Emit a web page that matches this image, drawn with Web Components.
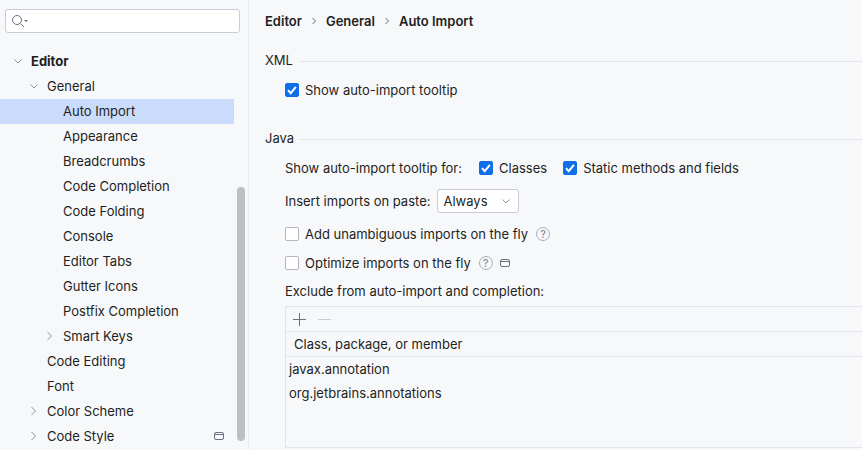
<!DOCTYPE html>
<html>
<head>
<meta charset="utf-8">
<style>
  html, body { margin: 0; height: 100%; overflow: hidden; }
  body {
    display: flex;
    width: 862px;
    height: 450px;
    background: #f7f8fa;
    color: #1e1f22;
    font: 13px/16px Inter, "Liberation Sans", sans-serif;
  }
</style>
</head>
<body>
<settings-sidebar>
  <tree-row level="0" clipped>Keymap</tree-row>
  <tree-row level="0" arrow="open" bold>Editor</tree-row>
  <tree-row level="1" arrow="open">General</tree-row>
  <tree-row level="2" selected>Auto Import</tree-row>
  <tree-row level="2">Appearance</tree-row>
  <tree-row level="2">Breadcrumbs</tree-row>
  <tree-row level="2">Code Completion</tree-row>
  <tree-row level="2">Code Folding</tree-row>
  <tree-row level="2">Console</tree-row>
  <tree-row level="2">Editor Tabs</tree-row>
  <tree-row level="2">Gutter Icons</tree-row>
  <tree-row level="2">Postfix Completion</tree-row>
  <tree-row level="2" arrow="closed">Smart Keys</tree-row>
  <tree-row level="1">Code Editing</tree-row>
  <tree-row level="1">Font</tree-row>
  <tree-row level="1" arrow="closed">Color Scheme</tree-row>
  <tree-row level="1" arrow="closed" project>Code Style</tree-row>
</settings-sidebar>
<settings-page></settings-page>

<script>
const PROJECT_ICON = `<svg width="10" height="10" viewBox="0 0 10 10" fill="none" stroke="#6c707e"><rect x="0.5" y="1.5" width="9" height="7" rx="1.5"/><path d="M0.5 3.5h9"/></svg>`;
const CHEVRON_DOWN = `<svg width="10" height="10" viewBox="0 0 10 10" fill="none" stroke="#8f93a1"><path d="M1.5 3.5L5 7l3.5-3.5"/></svg>`;
const CHEVRON_RIGHT = `<svg width="10" height="10" viewBox="0 0 10 10" fill="none" stroke="#8f93a1"><path d="M2.5 1L6.5 5l-4 4"/></svg>`;

class SettingsSidebar extends HTMLElement {
  connectedCallback() {
    this.attachShadow({ mode: 'open' });
    this.shadowRoot.innerHTML = `
      <style>
        :host { display: flex; flex-direction: column; flex: none; width: 248px; height: 450px; border-right: 1px solid #ebecf0; position: relative; box-sizing: content-box; }
        .search { padding: 9px 0 11px 5px; flex: none; }
        .box { height: 24px; width: 235px; background: #fff; border: 1px solid #c9ccd6; border-radius: 3px; display: flex; align-items: center; padding-left: 6px; box-sizing: border-box; }
        .tree { flex: 1; overflow: hidden; padding-right: 14px; }
        .scroll { margin-top: -20px; }
        .thumb { position: absolute; left: 237px; top: 187px; width: 8px; height: 254px; border-radius: 4px; background: #bdbfc3; }
      </style>
      <div class="search"><div class="box">
        <svg width="18" height="16" viewBox="0 0 18 16" fill="none" stroke="#6c707e">
          <circle cx="5" cy="7" r="4.5"/><path d="M8.5 10.5L12 14"/>
          <path d="M12 7h4l-2 2z" fill="#6c707e" stroke="none"/>
        </svg>
      </div></div>
      <div class="tree"><div class="scroll"><slot></slot></div></div>
      <div class="thumb"></div>
    `;
  }
}
customElements.define('settings-sidebar', SettingsSidebar);

class TreeRow extends HTMLElement {
  connectedCallback() {
    const level = +this.getAttribute('level');
    const arrow = this.getAttribute('arrow');
    const icon = arrow === 'open' ? CHEVRON_DOWN : arrow === 'closed' ? CHEVRON_RIGHT : '';
    this.attachShadow({ mode: 'open' });
    this.shadowRoot.innerHTML = `
      <style>
        :host { display: flex; align-items: center; box-sizing: border-box; height: 25px; padding: 0 0 1px ${13 + level * 16}px; white-space: nowrap; }
        :host([selected]) { background: #c9dcfc; }
        :host([bold]) { font-weight: 700; }
        .arrow { width: 18px; flex: none; display: flex; }
        .label { flex: 1; }
        .project { display: flex; margin-right: 10px; }
      </style>
      <span class="arrow">${icon}</span>
      <span class="label"><slot></slot></span>
      ${this.hasAttribute('project') ? `<span class="project">${PROJECT_ICON}</span>` : ''}
    `;
  }
}
customElements.define('tree-row', TreeRow);

class GroupTitle extends HTMLElement {
  connectedCallback() {
    this.attachShadow({ mode: 'open' });
    this.shadowRoot.innerHTML = `
      <style>
        :host { display: flex; align-items: center; gap: 6px; height: 16px; }
        i { flex: 1; height: 1px; margin-top: 2px; background: #e3e5ea; }
      </style>
      <slot></slot><i></i>
    `;
  }
}
customElements.define('group-title', GroupTitle);

class CheckOption extends HTMLElement {
  connectedCallback() {
    const on = this.hasAttribute('checked');
    this.attachShadow({ mode: 'open' });
    this.shadowRoot.innerHTML = `
      <style>
        :host { display: inline-flex; align-items: center; gap: 6px; white-space: nowrap; }
        .box { width: 14px; height: 14px; box-sizing: border-box; border-radius: 2px; display: flex; border: 1px solid ${on ? '#0f6fe8' : '#b4b7c0'}; background: ${on ? '#0f6fe8' : '#fff'}; }
        svg { margin: -1px; flex: none; }
      </style>
      <span class="box">${on ? `<svg width="14" height="14" viewBox="0 0 14 14" fill="none" stroke="#fff" stroke-width="2"><path d="M3 7.2l2.7 3 5.2-6.4"/></svg>` : ''}</span>
      <slot></slot>
    `;
  }
}
customElements.define('check-option', CheckOption);

class HelpIcon extends HTMLElement {
  connectedCallback() {
    this.attachShadow({ mode: 'open' });
    this.shadowRoot.innerHTML = `
      <style>
        :host { display: inline-flex; width: 14px; height: 14px; align-items: center; justify-content: center; border-radius: 50%; border: 1px solid #a8adbd; box-sizing: border-box; color: #8a8f9e; font-size: 11px; line-height: 12px; font-weight: 500; }
      </style>?
    `;
  }
}
customElements.define('help-icon', HelpIcon);

class ComboBox extends HTMLElement {
  connectedCallback() {
    this.attachShadow({ mode: 'open' });
    this.shadowRoot.innerHTML = `
      <style>
        :host { display: inline-flex; align-items: center; justify-content: space-between; width: 82px; height: 24px; box-sizing: border-box; padding: 0 7px 0 5px; background: #fff; border: 1px solid #c9ccd6; border-radius: 3px; }
        svg { display: block; }
      </style>
      <slot></slot>${CHEVRON_DOWN}
    `;
  }
}
customElements.define('combo-box', ComboBox);

class ExcludeTable extends HTMLElement {
  connectedCallback() {
    this.attachShadow({ mode: 'open' });
    this.shadowRoot.innerHTML = `
      <style>
        :host { display: block; border: 1px solid #e3e5ea; border-right: 0; height: 142px; box-sizing: border-box; }
        .tools { display: flex; align-items: center; gap: 9px; height: 24px; padding-left: 5px; border-bottom: 1px solid #e3e5ea; }
        .head { display: flex; align-items: center; height: 24px; padding-left: 8px; border-bottom: 1px solid #e3e5ea; }
        .rows { padding-left: 3px; }
        .rows div { height: 24px; display: flex; align-items: center; }
        svg { display: block; }
      </style>
      <div class="tools">
        <svg width="16" height="16" viewBox="0 0 16 16" stroke="#6c707e"><path d="M8.5 2v13M2 8.5h13" fill="none"/></svg>
        <svg width="16" height="16" viewBox="0 0 16 16" stroke="#c9ccd6"><path d="M2 8.5h13" fill="none"/></svg>
      </div>
      <div class="head">Class, package, or member</div>
      <div class="rows"><div>javax.annotation</div><div>org.jetbrains.annotations</div></div>
    `;
  }
}
customElements.define('exclude-table', ExcludeTable);

class SettingsPage extends HTMLElement {
  connectedCallback() {
    this.attachShadow({ mode: 'open' });
    this.shadowRoot.innerHTML = `
      <style>
        :host { display: block; flex: 1; min-width: 0; padding: 13px 0 0 16px; box-sizing: border-box; overflow: hidden; }
        .crumbs { display: flex; align-items: center; font-weight: 600; height: 16px; }
        .crumbs svg { margin: 0 8px; }
        group-title.xml { margin-top: 23px; }
        group-title.java { margin-top: 32px; }
        .indent { padding-left: 20px; display: flex; flex-direction: column; align-items: stretch; }
        .line { display: flex; align-items: center; white-space: nowrap; height: 16px; }
        .mini { display: flex; margin-left: 7px; }
        help-icon { margin-left: 8px; }
      </style>
      <div class="crumbs">Editor
        <svg width="8" height="10" viewBox="0 0 8 10" fill="none" stroke="#6c707e"><path d="M2.5 2l3 3-3 3"/></svg>General
        <svg width="8" height="10" viewBox="0 0 8 10" fill="none" stroke="#6c707e"><path d="M2.5 2l3 3-3 3"/></svg>Auto Import
      </div>
      <group-title class="xml">XML</group-title>
      <div class="indent">
        <div class="line" style="margin-top:14px"><check-option checked>Show auto-import tooltip</check-option></div>
      </div>
      <group-title class="java">Java</group-title>
      <div class="indent">
        <div class="line" style="margin-top:14px">Show auto-import tooltip for:
          <check-option checked style="margin-left:17px">Classes</check-option>
          <check-option checked style="margin-left:16px">Static methods and fields</check-option>
        </div>
        <div class="line" style="margin-top:13px;height:24px">Insert imports on paste:<combo-box style="margin-left:7px">Always</combo-box></div>
        <div class="line" style="margin-top:13px"><check-option>Add unambiguous imports on the fly</check-option><help-icon></help-icon></div>
        <div class="line" style="margin-top:13px"><check-option>Optimize imports on the fly</check-option><help-icon></help-icon><span class="mini">${PROJECT_ICON}</span></div>
        <div class="line" style="margin-top:12px">Exclude from auto-import and completion:</div>
        <exclude-table style="margin-top:7px"></exclude-table>
      </div>
    `;
  }
}
customElements.define('settings-page', SettingsPage);
</script>
</body>
</html>
